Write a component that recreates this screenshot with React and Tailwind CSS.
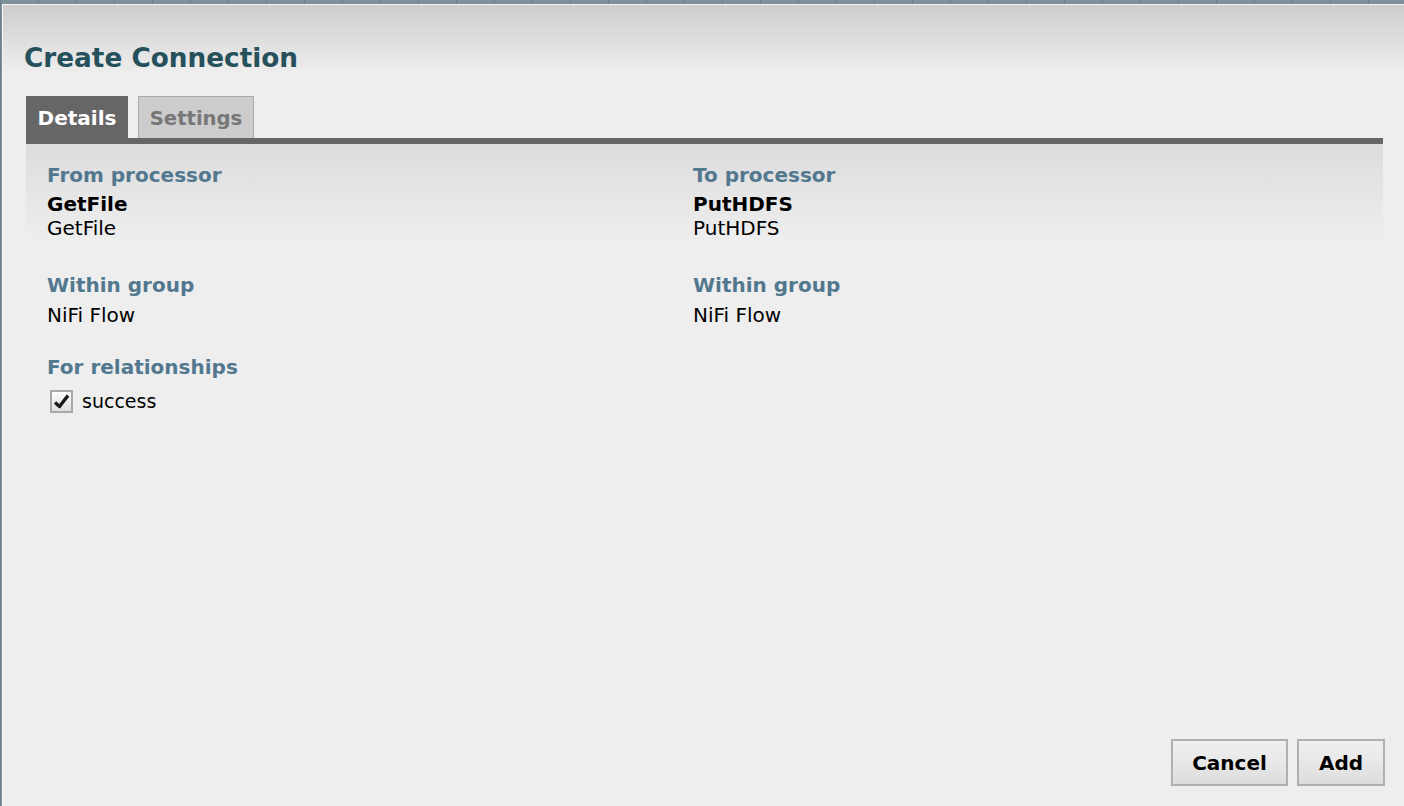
import { useState } from "react";

const FONT = { fontFamily: '"DejaVu Sans", Verdana, sans-serif' };

function Field({ label, bold, value, className = "" }) {
  return (
    <div className={className}>
      <p className="text-[20px] leading-[24px] font-bold text-[#52788f]">{label}</p>
      {bold && <p className="mt-[5px] text-[20px] leading-[24px] font-bold text-black">{bold}</p>}
      <p className={`${bold ? "" : "mt-[6px]"} text-[20px] leading-[24px] text-black`}>{value}</p>
    </div>
  );
}

function Checkbox({ checked, onChange }) {
  return (
    <button
      type="button"
      onClick={onChange}
      className="flex h-[23px] w-[23px] items-center justify-center border-2 border-[#a8a8a8] bg-[linear-gradient(#fdfdfd,#dedede)]"
    >
      {checked && (
        <svg width="17" height="17" viewBox="0 0 17 17">
          <path d="M2 9.5 L6.5 13.5 L15 2.5" fill="none" stroke="#1a1a1a" strokeWidth="3.4" strokeLinejoin="round" />
        </svg>
      )}
    </button>
  );
}

export default function App() {
  const [tab, setTab] = useState("details");
  const [success, setSuccess] = useState(true);

  return (
    <div
      className="h-[806px] w-[1404px] overflow-hidden bg-[repeating-linear-gradient(90deg,#6c808a_0px,#6c808a_1px,#7b9099_1px,#7b9099_38px)] pl-[2px] pt-[4px]"
      style={FONT}
    >
      <div className="flex h-[802px] flex-col border-l border-t border-[#f6f6f6] bg-[linear-gradient(#cdcdcd,#eeeeee_68px,#eeeeee)]">
        {/* Header */}
        <h1 className="pl-[21px] pt-[37px] text-[26.3px] leading-[32px] font-bold text-[#25505c]">
          Create Connection
        </h1>

        {/* Tabs */}
        <div className="mt-[22px] ml-[23px] mr-[21px]">
          <div className="flex items-end gap-[10px]">
            <button
              type="button"
              onClick={() => setTab("details")}
              className={`flex h-[42px] w-[102px] items-center justify-center pt-[2px] text-[20px] font-bold ${
                tab === "details" ? "bg-[#666666] text-white" : "border border-[#aaaaaa] bg-[#cccccc] text-[#777777]"
              }`}
            >
              Details
            </button>
            <button
              type="button"
              onClick={() => setTab("settings")}
              className={`flex h-[42px] w-[116px] items-center justify-center pt-[2px] text-[19.6px] font-bold ${
                tab === "settings" ? "bg-[#666666] text-white" : "border border-b-0 border-[#aaaaaa] bg-[#cccccc] text-[#777777]"
              }`}
            >
              Settings
            </button>
          </div>
          <div className="h-[6px] bg-[#666666]" />

          {/* Panel */}
          <div className="bg-[linear-gradient(#dcdcdc,#eeeeee_96px)] px-[21px] pt-[19px] pb-[20px]">
            <div className="grid grid-cols-[646px_1fr]">
              <div>
                <Field label="From processor" bold="GetFile" value="GetFile" />
                <Field label="Within group" value="NiFi Flow" className="mt-[33px]" />
                <div className="mt-[28px]">
                  <p className="text-[20px] leading-[24px] font-bold text-[#52788f]">For relationships</p>
                  <div className="mt-[10px] ml-[3px] flex items-center gap-[9px]">
                    <Checkbox checked={success} onChange={() => setSuccess(!success)} />
                    <span className="text-[19px] leading-[24px] text-black">success</span>
                  </div>
                </div>
              </div>
              <div>
                <Field label="To processor" bold="PutHDFS" value="PutHDFS" />
                <Field label="Within group" value="NiFi Flow" className="mt-[33px]" />
              </div>
            </div>
          </div>
        </div>

        {/* Footer */}
        <div className="mt-auto flex justify-end gap-[9px] pr-[19px] pb-[20px]">
          <button
            type="button"
            className="h-[47px] w-[117px] border-2 border-[#b0b0b0] bg-[linear-gradient(#f0f0f0,#e8e8e8_50%,#dcdcdc)] text-[20px] font-bold text-black"
          >
            Cancel
          </button>
          <button
            type="button"
            className="h-[47px] w-[88px] border-2 border-[#b0b0b0] bg-[linear-gradient(#f0f0f0,#e8e8e8_50%,#dcdcdc)] text-[20px] font-bold text-black"
          >
            Add
          </button>
        </div>
      </div>
    </div>
  );
}
